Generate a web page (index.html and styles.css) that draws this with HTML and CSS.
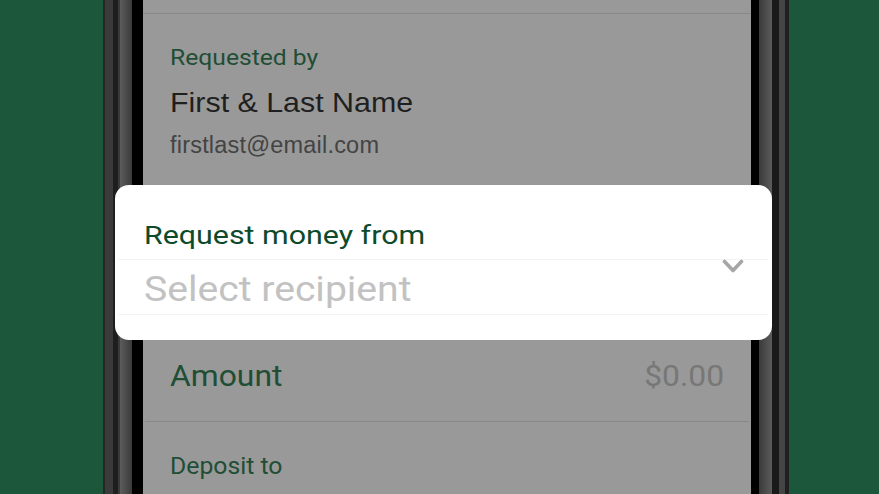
FILE: index.html
```html
<!DOCTYPE html>
<html>
<head>
<meta charset="utf-8">
<link rel="stylesheet" href="styles.css">
</head>
<body>
<div class="stage">
  <div class="phone">
    <div class="screen">
      <div class="divider top"></div>
      <div class="section requester">
        <div class="label"><span class="wide w-req">Requested by</span></div>
        <div class="name"><span class="wide w-name">First &amp; Last Name</span></div>
        <div class="email">firstlast@email.com</div>
      </div>
      <div class="row amount">
        <span class="row-label wide w-amt">Amount</span>
        <span class="row-value wide w-val">$0.00</span>
      </div>
      <div class="divider inset"></div>
      <div class="section deposit">
        <div class="label"><span class="wide w-dep">Deposit to</span></div>
      </div>
    </div>
  </div>
  <div class="card">
    <div class="card-label"><span class="wide w-card">Request money from</span></div>
    <div class="card-line"></div>
    <div class="card-select">
      <span class="placeholder wide w-sel">Select recipient</span>
      <svg class="chevron" width="22" height="16" viewBox="0 0 22 16"><polyline points="2.5,2.5 11,11.5 19.5,2.5" fill="none" stroke="#a6a6a6" stroke-width="3.6" stroke-linecap="round" stroke-linejoin="round"/></svg>
    </div>
    <div class="card-line"></div>
  </div>
</div>
</body>
</html>
```
FILE: styles.css
```css
html, body {
  margin: 0;
  padding: 0;
}
body {
  width: 879px;
  height: 494px;
  overflow: hidden;
  background: #1d573b;
}
.stage {
  position: relative;
  width: 879px;
  height: 494px;
  display: flex;
  padding-left: 103px;
  box-sizing: border-box;
}
.phone {
  width: 686px;
  height: 494px;
  box-sizing: border-box;
  padding: 0 38px 0 40px;
  display: flex;
  background: linear-gradient(to right,
    #262626 0px, #262626 2px,
    #3b3b3b 2px, #3b3b3b 10px,
    #1e1e1e 10px, #1e1e1e 15px,
    #3a3a3a 15px, #3a3a3a 17px,
    #5c5c5c 17px, #3a3a3a 29px,
    #000 29px, #000 40px,
    #000 648px, #000 656px,
    #3a3a3a 656px, #5c5c5c 669px,
    #1a1a1a 669px, #1a1a1a 676px,
    #454545 676px, #454545 682px,
    #202020 682px, #202020 686px);
}
.screen {
  flex: 1;
  background: #999999;
  display: flex;
  flex-direction: column;
  font-family: Roboto, "Liberation Sans", sans-serif;
}
.wide {
  display: inline-block;
  transform-origin: left center;
}
.w-req { transform: scaleX(1.096); }
.w-name { transform: scaleX(1.105); }
.w-amt { transform: scaleX(1.079); }
.w-val { transform: scaleX(1.079); transform-origin: right center; }
.w-dep { transform: scaleX(1.077); }
.w-card { transform: scaleX(1.146); }
.w-sel { transform: scaleX(1.118); }
.divider {
  height: 1px;
  background: #888888;
}
.divider.top {
  margin-top: 13px;
}
.divider.inset {
  margin: 0 2px;
}
.section {
  padding-left: 27px;
}
.requester {
  padding-top: 30px;
}
.label {
  font-size: 22.5px;
  line-height: 26px;
  color: #1f4e35;
}
.name {
  margin-top: 17px;
  font-family: "Liberation Sans", Arial, sans-serif;
  font-size: 27.5px;
  line-height: 32px;
  color: #1f1f1f;
}
.email {
  margin-top: 12px;
  font-family: "Liberation Sans", Arial, sans-serif;
  font-size: 23.5px;
  line-height: 28px;
  letter-spacing: 0.2px;
  color: #444444;
}
.row {
  display: flex;
  justify-content: space-between;
  align-items: baseline;
  padding: 0 27px;
}
.amount {
  margin-top: 200px;
  height: 62px;
  font-size: 29.5px;
  line-height: 34px;
}
.row-label {
  color: #1f4e35;
}
.row-value {
  color: #777777;
}
.deposit {
  padding-top: 31px;
}
.deposit .label {
  font-size: 23px;
  line-height: 28px;
}
.card {
  position: absolute;
  left: 115px;
  top: 185px;
  width: 657px;
  height: 155px;
  background: #ffffff;
  border-radius: 14px;
  display: flex;
  flex-direction: column;
  font-family: Roboto, "Liberation Sans", sans-serif;
}
.card-label {
  margin-top: 34px;
  padding-left: 29px;
  font-size: 26.5px;
  line-height: 32px;
  color: #0d4a2b;
}
.card-line {
  height: 1px;
  margin: 0 4px 0 3px;
  background: #f3f3f3;
}
.card-label + .card-line {
  margin-top: 8px;
}
.card-select {
  display: flex;
  align-items: flex-start;
  justify-content: space-between;
  padding: 0 28px 0 29px;
  height: 54px;
}
.placeholder {
  margin-top: 9px;
  font-size: 35px;
  line-height: 42px;
  color: #c2c2c2;
}
.chevron {
  margin-top: -1px;
}
```
